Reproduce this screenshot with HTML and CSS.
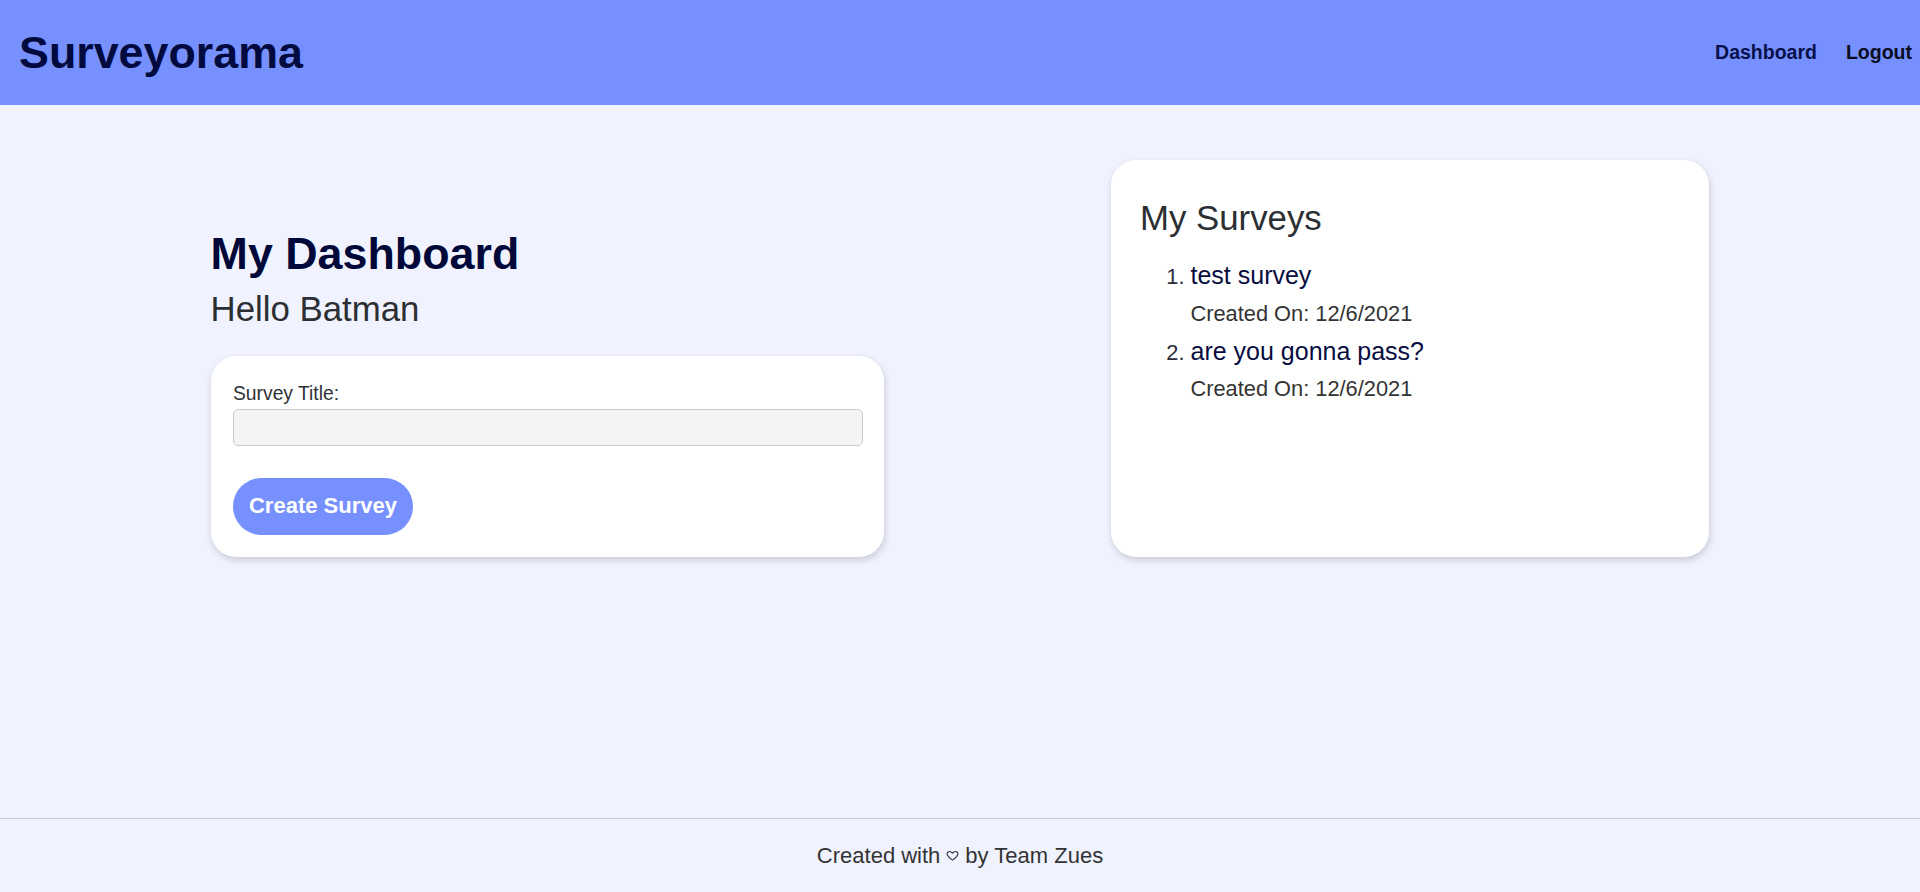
FILE: index.html
```html
<!DOCTYPE html>
<html lang="en">
<head>
<meta charset="utf-8">
<title>Surveyorama</title>
<link rel="stylesheet" href="styles.css">
</head>
<body>
<header class="topbar">
  <div class="brand">Surveyorama</div>
  <nav class="nav">
    <a class="nav-link nav-active" href="#">Dashboard</a>
    <a class="nav-link" href="#">Logout</a>
  </nav>
</header>
<main class="main">
  <div class="row">
    <section class="left">
      <h1 class="title">My Dashboard</h1>
      <h2 class="hello">Hello Batman</h2>
      <form class="card form-card">
        <label class="label" for="st">Survey Title:</label>
        <input class="input" id="st" type="text">
        <button class="btn" type="button">Create Survey</button>
      </form>
    </section>
    <section class="card list-card">
      <h2 class="list-title">My Surveys</h2>
      <ol class="surveys">
        <li class="survey">
          <div class="survey-name">test survey</div>
          <p class="survey-date">Created On: 12/6/2021</p>
        </li>
        <li class="survey">
          <div class="survey-name">are you gonna pass?</div>
          <p class="survey-date">Created On: 12/6/2021</p>
        </li>
      </ol>
    </section>
  </div>
</main>
<footer class="footer">
  <span>Created with</span>
  <svg class="heart" viewBox="0 0 24 24" width="13" height="13" aria-hidden="true"><path d="M12 20.5s-7.6-4.7-9.5-9.3C1.2 8 3.2 4.5 6.7 4.5c2.2 0 3.8 1.3 5.3 3.3 1.5-2 3.1-3.3 5.3-3.3 3.5 0 5.5 3.5 4.2 6.7-1.9 4.6-9.5 9.3-9.5 9.3z" fill="none" stroke="#333" stroke-width="2" stroke-linejoin="round"/></svg>
  <span>by Team Zues</span>
</footer>
</body>
</html>
```

FILE: styles.css
```css
* { box-sizing: border-box; }

html, body { height: 100%; }

body {
  margin: 0;
  min-height: 100vh;
  display: flex;
  flex-direction: column;
  background: #f0f3ff;
  font-family: "Liberation Sans", Arial, sans-serif;
  color: #333;
  line-height: normal;
}

.topbar {
  height: 105px;
  flex-shrink: 0;
  background: #7690ff;
  display: flex;
  align-items: center;
  justify-content: space-between;
  padding: 0 8px 0 19px;
}

.brand {
  font-size: 44.8px;
  font-weight: 700;
  color: #010a3e;
}

.nav {
  display: flex;
  align-items: center;
  gap: 29px;
}

.nav-link {
  font-size: 19.5px;
  font-weight: 700;
  color: #0a0d22;
  text-decoration: none;
}

.nav-active { color: #08104a; }

.main {
  flex: 1;
  padding-top: 55px;
}

.row {
  display: flex;
  justify-content: space-between;
  align-items: stretch;
  padding: 0 211px 0 210.6px;
}

.left {
  width: 673.4px;
  display: flex;
  flex-direction: column;
}

.title {
  margin: 67.8px 0 0;
  font-size: 44.8px;
  font-weight: 700;
  color: #000839;
  line-height: normal;
}

.hello {
  margin: 10.6px 0 0;
  font-size: 34.8px;
  font-weight: 400;
  color: #2b2f33;
  line-height: normal;
}

.card {
  background: #fff;
  border-radius: 25px;
  box-shadow: 1px 3px 7px rgba(0, 0, 0, 0.17);
}

.form-card {
  margin-top: 26.6px;
  padding: 27px 21px 22px 22.4px;
  display: flex;
  flex-direction: column;
  align-items: flex-start;
}

.label {
  font-size: 19.3px;
  color: #2f3237;
}

.input {
  margin-top: 4px;
  width: 100%;
  height: 36.8px;
  background: #f4f4f4;
  border: 1px solid #cccccc;
  border-radius: 5px;
  font-family: inherit;
  font-size: 18px;
  padding: 0 8px;
}

.btn {
  margin-top: 32.2px;
  height: 56.7px;
  padding: 0 16px;
  border: none;
  border-radius: 29px;
  background: #7690ff;
  color: #fff;
  font-family: inherit;
  font-size: 22px;
  font-weight: 700;
}

.list-card {
  width: 598.4px;
  padding: 37.6px 30px 30px 29.4px;
}

.list-title {
  margin: 0;
  font-size: 34.8px;
  font-weight: 400;
  color: #2b2f33;
  line-height: normal;
}

.surveys {
  margin: 23.6px 0 0;
  padding-left: 50.5px;
  font-size: 21.8px;
  color: #2b2e3a;
}

.survey-name {
  font-size: 25px;
  color: #070d3f;
}

.survey-date {
  margin: 10.5px 0 10.1px;
  font-size: 21.8px;
  color: #333;
}

.footer {
  flex-shrink: 0;
  height: 74px;
  border-top: 1px solid #c9c9cf;
  display: flex;
  align-items: center;
  justify-content: center;
  gap: 5px;
  font-size: 22px;
  color: #333;
}

.heart {
  display: block;
  margin: 0 1px;
}
```
